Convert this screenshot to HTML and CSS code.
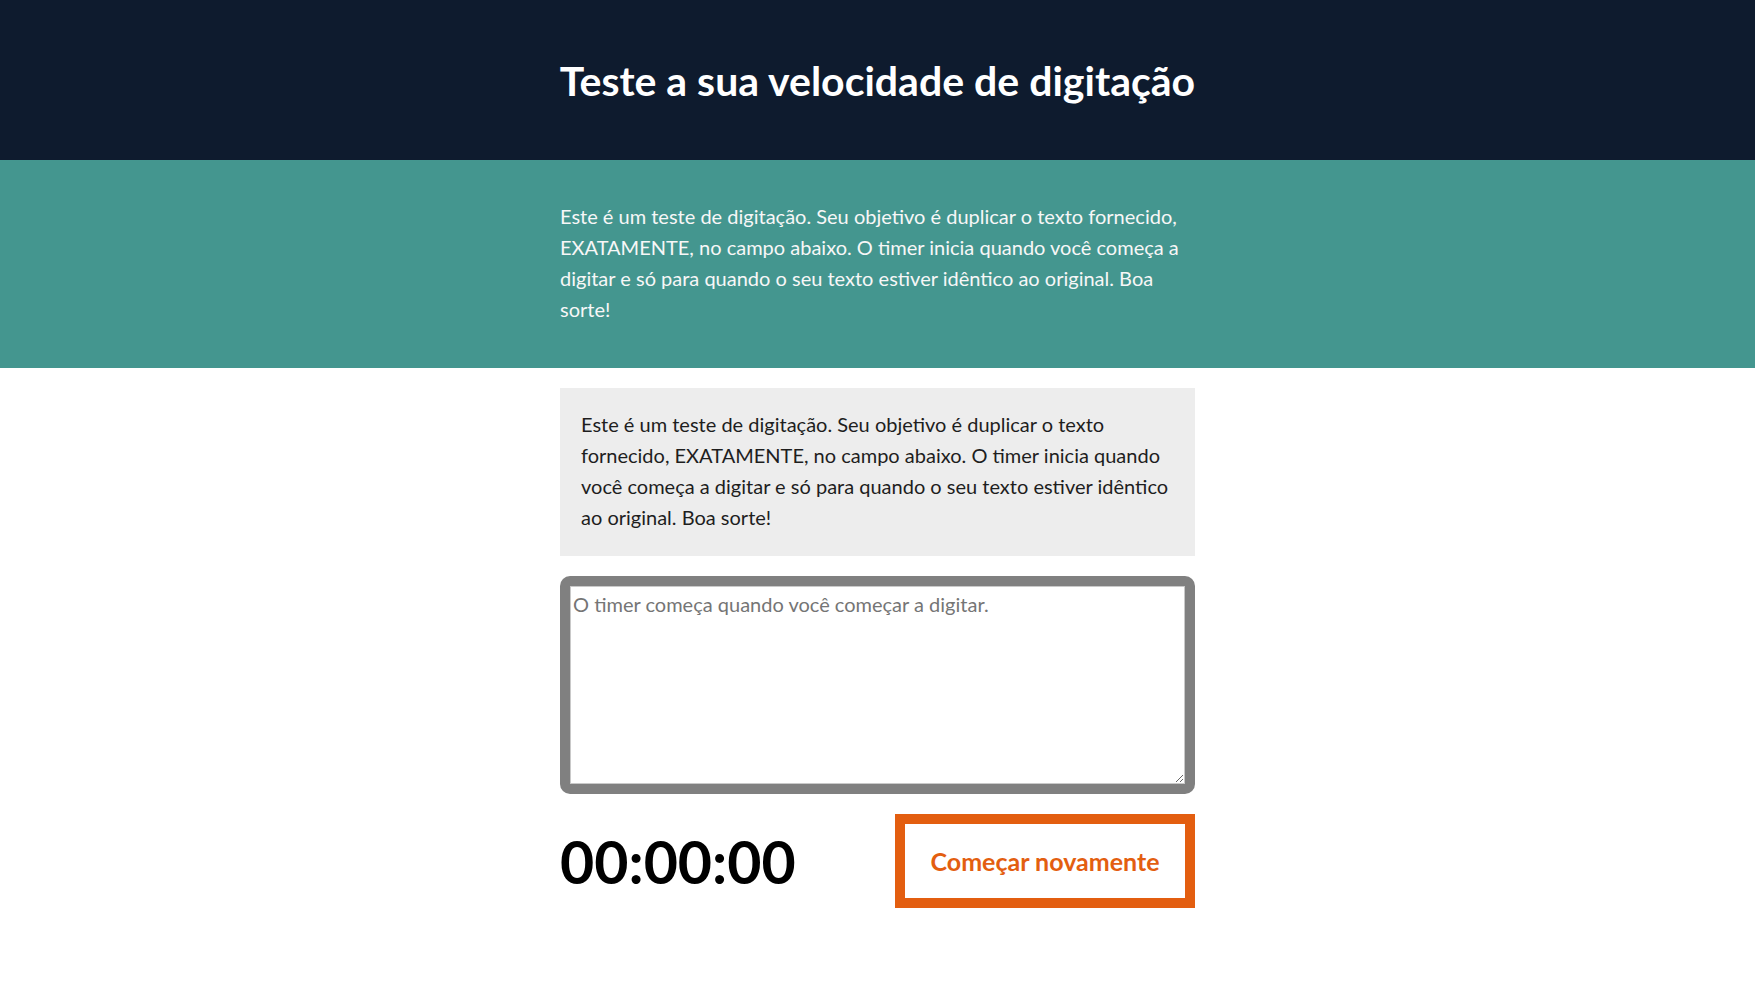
FILE: index.html
```html
<!DOCTYPE html>
<html lang="pt-BR">
<head>
<meta charset="utf-8">
<title>Teste a sua velocidade de digitação</title>
<link rel="stylesheet" href="styles.css">
</head>
<body>
<header class="masthead">
  <h1 class="title">Teste a sua velocidade de digitação</h1>
</header>
<section class="intro">
  <p class="intro-text">Este é um teste de digitação. Seu objetivo é duplicar o texto fornecido, EXATAMENTE, no campo abaixo. O timer inicia quando você começa a digitar e só para quando o seu texto estiver idêntico ao original. Boa sorte!</p>
</section>
<main class="test">
  <div class="origin-text">
    <p>Este é um teste de digitação. Seu objetivo é duplicar o texto fornecido, EXATAMENTE, no campo abaixo. O timer inicia quando você começa a digitar e só para quando o seu texto estiver idêntico ao original. Boa sorte!</p>
  </div>
  <div class="test-wrapper">
    <textarea class="test-area" placeholder="O timer começa quando você começar a digitar."></textarea>
  </div>
  <div class="meta">
    <div class="timer">00:00:00</div>
    <button class="reset" type="button">Começar novamente</button>
  </div>
</main>
</body>
</html>
```

FILE: styles.css
```css
* { box-sizing: border-box; }
html, body { margin: 0; padding: 0; background: #fff; }
body { font-family: Lato, "Open Sans", sans-serif; color: #222; }

.masthead {
  background: #0e1b2e;
  height: 160px;
  display: flex;
  align-items: center;
  justify-content: center;
}
.title {
  margin: 0;
  width: 700px;
  text-align: center;
  color: #fff;
  font-size: 41px;
  font-weight: 700;
  line-height: 1;
}

.intro {
  background: #44968f;
  padding: 41px 0 43px;
}
.intro-text {
  width: 635px;
  margin: 0 auto;
  color: #f7f7f7;
  font-size: 20px;
  line-height: 31px;
}

.test {
  width: 635px;
  margin: 20px auto 0;
  display: flex;
  flex-direction: column;
  gap: 20px;
}
.origin-text {
  background: #ededed;
  padding: 21px 21px 23px;
}
.origin-text p {
  margin: 0;
  font-size: 20px;
  line-height: 31px;
  color: #1e1e1e;
}

.test-wrapper {
  background: #808080;
  border-radius: 10px;
  padding: 10px;
  display: flex;
}
.test-area {
  width: 100%;
  height: 198px;
  margin: 0;
  border: 1px solid #c9c9c9;
  padding: 2px;
  font-family: Lato, "Open Sans", sans-serif;
  font-size: 20px;
  line-height: 30px;
  background: #fff;
  resize: vertical;
}
.test-area::placeholder { color: #757575; }

.meta {
  display: flex;
  align-items: center;
  justify-content: space-between;
}
.timer {
  font-size: 59px;
  font-weight: 700;
  color: #000;
  line-height: 1;
}
.reset {
  width: 300px;
  height: 94px;
  border: 10px solid #e35e10;
  background: #fff;
  color: #e35e10;
  font-family: Lato, "Open Sans", sans-serif;
  font-size: 25px;
  font-weight: 700;
  padding: 0;
  cursor: pointer;
}
```
